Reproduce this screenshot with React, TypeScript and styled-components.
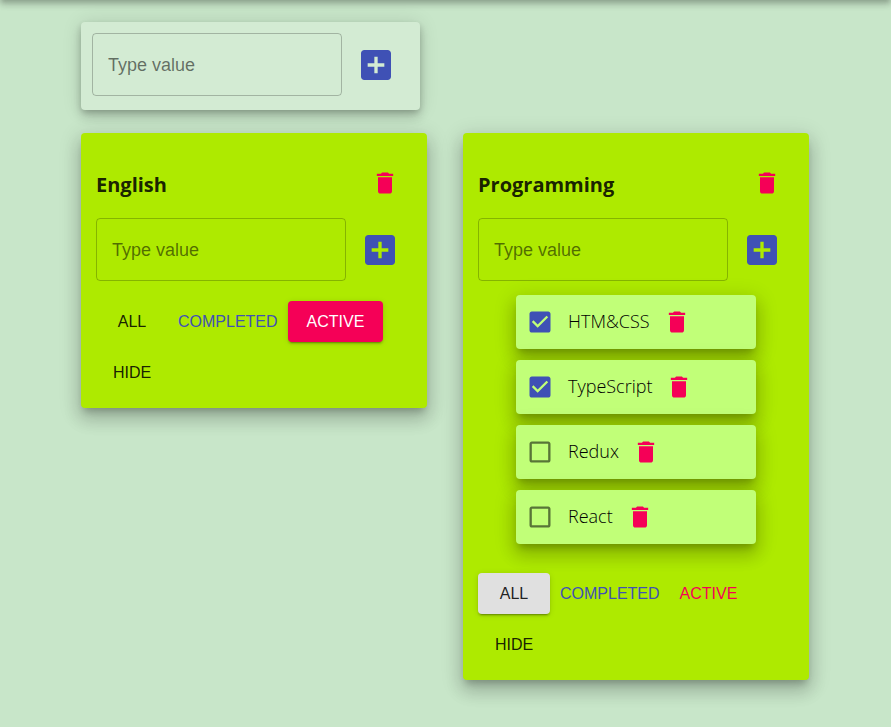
import React, { useId, useState } from "react";
import styled, { createGlobalStyle, css } from "styled-components";

const blue = "#3f51b5";
const pink = "#f50057";
const ink = "rgba(0, 0, 0, 0.87)";

const GlobalStyle = createGlobalStyle`
  *, *::before, *::after { box-sizing: border-box; }
  body {
    margin: 0;
    min-height: 100vh;
    background: #c8e6c9;
    color: ${ink};
    font-family: "Open Sans", "Noto Sans", sans-serif;
    font-size: 18px;
  }
`;

const raised = css`
  border-radius: 4px;
  box-shadow: 0 6px 7px -3px rgba(0, 0, 0, 0.2), 0 11px 17px 1px rgba(0, 0, 0, 0.14),
    0 5px 20px 4px rgba(0, 0, 0, 0.12);
`;

const TopBar = styled.header`
  height: 8px;
  margin-top: -8px;
  box-shadow: 0 2px 5px -1px rgba(0, 0, 0, 0.2), 0 5px 6px 0 rgba(0, 0, 0, 0.14),
    0 1px 11px 0 rgba(0, 0, 0, 0.12);
`;

const Main = styled.main`
  display: flex;
  flex-direction: column;
  align-items: flex-start;
  gap: 23px;
  max-width: 1280px;
  margin: 0 auto;
  padding: 22px 82px 40px 81px;
`;

const NewListPanel = styled.section`
  width: 339px;
  max-width: 100%;
  padding: 11px 24px 14px 11px;
  border-radius: 4px;
  background: #d3ebd3;
  box-shadow: 0 3px 6px -1px rgba(0, 0, 0, 0.2), 0 7px 11px 0 rgba(0, 0, 0, 0.14),
    0 1px 20px 0 rgba(0, 0, 0, 0.12);
`;

const Board = styled.div`
  display: grid;
  grid-template-columns: repeat(auto-fit, minmax(320px, 1fr));
  align-items: start;
  gap: 36px;
  width: 100%;
`;

const Card = styled.section`
  ${raised}
  padding: 15px;
  background: #aeea00;
`;

const TitleRow = styled.div`
  display: flex;
  align-items: center;
  justify-content: space-between;
  height: 70px;
  padding-right: 13px;
`;

const Title = styled.h3`
  margin: 0;
  padding-top: 4px;
  font-size: 20px;
  line-height: 28px;
  font-weight: 700;
`;

const AddForm = styled.form<{ $inset?: number }>`
  display: flex;
  align-items: center;
  gap: 14px;
  padding-right: ${(p) => p.$inset ?? 0}px;
`;

const TextBox = styled.input`
  flex: 1;
  min-width: 0;
  height: 63px;
  padding: 2px 15px 0;
  border: 1px solid rgba(0, 0, 0, 0.23);
  border-radius: 4px;
  background: transparent;
  color: ${ink};
  font-family: "Liberation Sans", Arial, sans-serif;
  font-size: 18px;
  outline: none;

  &::placeholder {
    color: rgba(0, 0, 0, 0.54);
    opacity: 1;
  }

  &:focus {
    border-color: ${blue};
  }
`;

const IconButton = styled.button<{ $color: string }>`
  display: flex;
  flex: none;
  padding: 0;
  border: 0;
  background: none;
  color: ${(p) => p.$color};
  cursor: pointer;
`;

const Glyph = styled.svg<{ $size: number }>`
  display: block;
  width: ${(p) => p.$size}px;
  height: ${(p) => p.$size}px;
  fill: currentColor;
`;

const TaskList = styled.ul`
  display: flex;
  flex-direction: column;
  gap: 11px;
  margin: 14px 38px 29px;
  padding: 0;
  list-style: none;
`;

const TaskRow = styled.li`
  ${raised}
  display: flex;
  align-items: center;
  gap: 13px;
  height: 54px;
  padding: 0 10px;
  background: #c1ff78;
`;

const TaskLabel = styled.label`
  display: flex;
  align-items: center;
  gap: 14px;
  cursor: pointer;
`;

const TaskText = styled.span`
  padding-bottom: 2px;
  color: #000;
  font-size: 18px;
  line-height: 26px;
  font-weight: 300;
`;

const TickBox = styled.span<{ $checked: boolean }>`
  position: relative;
  display: block;
  color: ${(p) => (p.$checked ? blue : "rgba(0, 0, 0, 0.54)")};
`;

const TickInput = styled.input`
  position: absolute;
  inset: 0;
  width: 100%;
  height: 100%;
  margin: 0;
  opacity: 0;
  cursor: pointer;
`;

const Filters = styled.div`
  display: flex;
  flex-wrap: wrap;
  row-gap: 10px;
  margin-top: 20px;
`;

type Tone = "plain" | "blue" | "pink";
const textColors: Record<Tone, string> = { plain: ink, blue, pink };
const fills: Record<Tone, string> = { plain: "#e0e0e0", blue, pink };

const FilterButton = styled.button<{ $tone: Tone; $filled?: boolean }>`
  min-width: 72px;
  height: 41px;
  padding: 0 10px;
  border: 0;
  border-radius: 4px;
  background: transparent;
  color: ${(p) => textColors[p.$tone]};
  font-family: "Liberation Sans", Arial, sans-serif;
  font-size: 16px;
  line-height: 28px;
  text-transform: uppercase;
  cursor: pointer;

  ${(p) =>
    p.$filled &&
    css`
      padding: 0 19px;
      background: ${fills[p.$tone]};
      color: ${p.$tone === "plain" ? ink : "#fff"};
      box-shadow: 0 3px 1px -2px rgba(0, 0, 0, 0.2), 0 2px 2px 0 rgba(0, 0, 0, 0.14),
        0 1px 6px 0 rgba(0, 0, 0, 0.12);
    `}
`;

const paths = {
  add: "M19 3H5c-1.11 0-2 .9-2 2v14c0 1.1.89 2 2 2h14c1.1 0 2-.9 2-2V5c0-1.1-.9-2-2-2zm-2 10h-4v4h-2v-4H7v-2h4V7h2v4h4v2z",
  trash: "M6 19c0 1.1.9 2 2 2h8c1.1 0 2-.9 2-2V7H6v12zM19 4h-3.5l-1-1h-5l-1 1H5v2h14V4z",
  checked:
    "M19 3H5c-1.11 0-2 .9-2 2v14c0 1.1.89 2 2 2h14c1.11 0 2-.9 2-2V5c0-1.1-.89-2-2-2zm-9 14l-5-5 1.41-1.41L10 14.17l7.59-7.59L19 8l-9 9z",
  unchecked:
    "M19 5v14H5V5h14m0-2H5c-1.1 0-2 .9-2 2v14c0 1.1.9 2 2 2h14c1.1 0 2-.9 2-2V5c0-1.1-.9-2-2-2z",
};

function Icon({ name, size }: { name: keyof typeof paths; size: number }) {
  return (
    <Glyph $size={size} viewBox="0 0 24 24" aria-hidden="true">
      <path d={paths[name]} />
    </Glyph>
  );
}

function AddItem({ label, inset, onAdd }: { label: string; inset?: number; onAdd: (v: string) => void }) {
  const [value, setValue] = useState("");
  return (
    <AddForm
      $inset={inset}
      onSubmit={(e) => {
        e.preventDefault();
        if (value.trim()) onAdd(value.trim());
        setValue("");
      }}
    >
      <TextBox
        type="text"
        aria-label={label}
        placeholder="Type value"
        value={value}
        onChange={(e) => setValue(e.target.value)}
      />
      <IconButton type="submit" $color={blue} aria-label="Add">
        <Icon name="add" size={40} />
      </IconButton>
    </AddForm>
  );
}

type Filter = "all" | "completed" | "active";
interface Task {
  text: string;
  done: boolean;
}
interface List {
  title: string;
  filter: Filter;
  tasks: Task[];
}

const filterTones: [Filter, Tone][] = [
  ["all", "plain"],
  ["completed", "blue"],
  ["active", "pink"],
];

function TodoCard({ list, onRemove }: { list: List; onRemove: () => void }) {
  const [tasks, setTasks] = useState(list.tasks);
  const [filter, setFilter] = useState<Filter>(list.filter);
  const [hidden, setHidden] = useState(false);
  const id = useId();
  const shown = tasks.filter((t) => filter === "all" || t.done === (filter === "completed"));

  return (
    <Card aria-labelledby={id}>
      <TitleRow>
        <Title id={id}>{list.title}</Title>
        <IconButton type="button" $color={pink} aria-label={`Delete ${list.title}`} onClick={onRemove}>
          <Icon name="trash" size={28} />
        </IconButton>
      </TitleRow>
      <AddItem
        label={`New task in ${list.title}`}
        inset={12}
        onAdd={(text) => setTasks([...tasks, { text, done: false }])}
      />
      {!hidden && shown.length > 0 && (
        <TaskList>
          {shown.map((task) => (
            <TaskRow key={task.text}>
              <TaskLabel>
                <TickBox $checked={task.done}>
                  <TickInput
                    type="checkbox"
                    checked={task.done}
                    onChange={() => setTasks(tasks.map((t) => (t === task ? { ...t, done: !t.done } : t)))}
                  />
                  <Icon name={task.done ? "checked" : "unchecked"} size={28} />
                </TickBox>
                <TaskText>{task.text}</TaskText>
              </TaskLabel>
              <IconButton
                type="button"
                $color={pink}
                aria-label={`Delete ${task.text}`}
                onClick={() => setTasks(tasks.filter((t) => t !== task))}
              >
                <Icon name="trash" size={28} />
              </IconButton>
            </TaskRow>
          ))}
        </TaskList>
      )}
      <Filters>
        {filterTones.map(([name, tone]) => (
          <FilterButton
            key={name}
            type="button"
            $tone={tone}
            $filled={filter === name}
            aria-pressed={filter === name}
            onClick={() => setFilter(name)}
          >
            {name}
          </FilterButton>
        ))}
        <FilterButton type="button" $tone="plain" onClick={() => setHidden(!hidden)}>
          {hidden ? "Show" : "Hide"}
        </FilterButton>
      </Filters>
    </Card>
  );
}

const initialLists: List[] = [
  { title: "English", filter: "active", tasks: [] },
  {
    title: "Programming",
    filter: "all",
    tasks: [
      { text: "HTM&CSS", done: true },
      { text: "TypeScript", done: true },
      { text: "Redux", done: false },
      { text: "React", done: false },
    ],
  },
];

export default function App() {
  const [lists, setLists] = useState(initialLists);
  return (
    <>
      <GlobalStyle />
      <TopBar />
      <Main>
        <NewListPanel>
          <AddItem
            label="New list"
            onAdd={(title) => setLists([...lists, { title, filter: "all", tasks: [] }])}
          />
        </NewListPanel>
        <Board>
          {lists.map((list) => (
            <TodoCard
              key={list.title}
              list={list}
              onRemove={() => setLists(lists.filter((l) => l !== list))}
            />
          ))}
        </Board>
      </Main>
    </>
  );
}
